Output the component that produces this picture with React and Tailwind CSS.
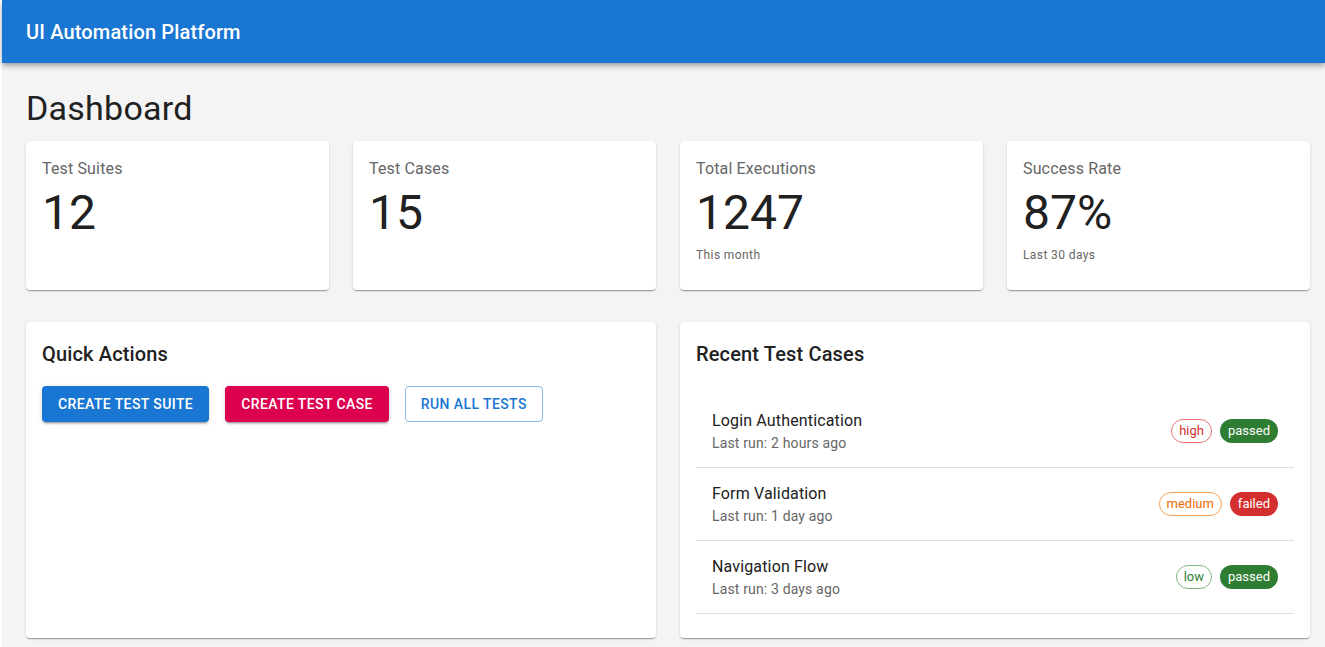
import React from "react";

const stats = [
  { label: "Test Suites", value: "12" },
  { label: "Test Cases", value: "15" },
  { label: "Total Executions", value: "1247", caption: "This month" },
  { label: "Success Rate", value: "87%", caption: "Last 30 days" },
];

const cases = [
  { name: "Login Authentication", run: "Last run: 2 hours ago", prio: "high", status: "passed" },
  { name: "Form Validation", run: "Last run: 1 day ago", prio: "medium", status: "failed" },
  { name: "Navigation Flow", run: "Last run: 3 days ago", prio: "low", status: "passed" },
];

const prioCls = {
  high: "border-[#e57373] text-[#d32f2f]",
  medium: "border-[#f5a05a] text-[#ed6c02]",
  low: "border-[#81b784] text-[#2e7d32]",
};
const statusCls = {
  passed: "bg-[#2e7d32]",
  failed: "bg-[#d32f2f]",
};

const cardShadow =
  "shadow-[0_2px_1px_-1px_rgba(0,0,0,0.2),0_1px_1px_0_rgba(0,0,0,0.14),0_1px_3px_0_rgba(0,0,0,0.12)]";
const btnShadow =
  "shadow-[0_3px_1px_-2px_rgba(0,0,0,0.2),0_2px_2px_0_rgba(0,0,0,0.14),0_1px_5px_0_rgba(0,0,0,0.12)]";

export default function App() {
  return (
    <div className="min-h-[647px] bg-white" style={{ fontFamily: "Roboto, 'Liberation Sans', sans-serif" }}>
      <div className="ml-[2px] min-h-[647px] bg-[#f4f4f4]">
        <header className="h-[63px] bg-[#1976d2] flex items-center px-6 shadow-[0_2px_4px_-1px_rgba(0,0,0,0.2),0_4px_5px_0_rgba(0,0,0,0.14),0_1px_10px_0_rgba(0,0,0,0.12)] relative">
          <h1 className="text-white text-[20px] font-medium leading-8 tracking-[0.15px]">UI Automation Platform</h1>
        </header>
        <main className="pl-6 pr-[15px] pt-[24px] pb-2">
          <h2 className="text-[34px] leading-[42px] text-[#212121] tracking-[0.25px] mb-[12px]">Dashboard</h2>
          <div className="grid grid-cols-4 gap-6">
            {stats.map((s) => (
              <div key={s.label} className={`h-[149px] bg-white rounded ${cardShadow} px-4 pt-4`}>
                <div className="text-base leading-6 text-[#666] tracking-[0.15px]">{s.label}</div>
                <div className="mt-1 text-[48px] leading-[56px] text-[#212121]">{s.value}</div>
                {s.caption && (
                  <div className="mt-[4px] text-xs leading-5 text-[#666] tracking-[0.4px]">{s.caption}</div>
                )}
              </div>
            ))}
          </div>
          <div className="grid grid-cols-2 gap-6 mt-8">
            <div className={`bg-white rounded ${cardShadow} p-4`}>
              <h3 className="text-[20px] font-medium leading-8 text-[#212121] tracking-[0.15px]">Quick Actions</h3>
              <div className="mt-4 flex gap-4">
                <button className={`h-9 px-4 rounded bg-[#1976d2] text-white text-sm font-medium uppercase tracking-[0.4px] ${btnShadow}`}>
                  Create Test Suite
                </button>
                <button className={`h-9 px-4 rounded bg-[#dc004e] text-white text-sm font-medium uppercase tracking-[0.4px] ${btnShadow}`}>
                  Create Test Case
                </button>
                <button className="h-9 px-[15px] rounded border border-[rgba(25,118,210,0.5)] text-[#1976d2] text-sm font-medium uppercase tracking-[0.4px]">
                  Run All Tests
                </button>
              </div>
            </div>
            <div className={`bg-white rounded ${cardShadow} px-4 pt-4 pb-4`}>
              <h3 className="text-[20px] font-medium leading-8 text-[#212121] tracking-[0.15px]">Recent Test Cases</h3>
              <ul className="mt-[17px] py-2">
                {cases.map((c) => (
                  <li key={c.name} className="flex items-center justify-between px-4 py-[14px] border-b border-[#e0e0e0]">
                    <div>
                      <div className="text-base leading-6 text-[#212121] tracking-[0.15px]">{c.name}</div>
                      <div className="text-sm leading-5 text-[#666] tracking-[0.15px]">{c.run}</div>
                    </div>
                    <div className="flex items-center gap-2">
                      <span className={`h-6 px-[7px] rounded-full border text-[13px] leading-[22px] ${prioCls[c.prio]}`}>
                        {c.prio}
                      </span>
                      <span className={`h-6 px-2 rounded-full text-white text-[13px] leading-6 ${statusCls[c.status]}`}>
                        {c.status}
                      </span>
                    </div>
                  </li>
                ))}
              </ul>
            </div>
          </div>
        </main>
      </div>
    </div>
  );
}
